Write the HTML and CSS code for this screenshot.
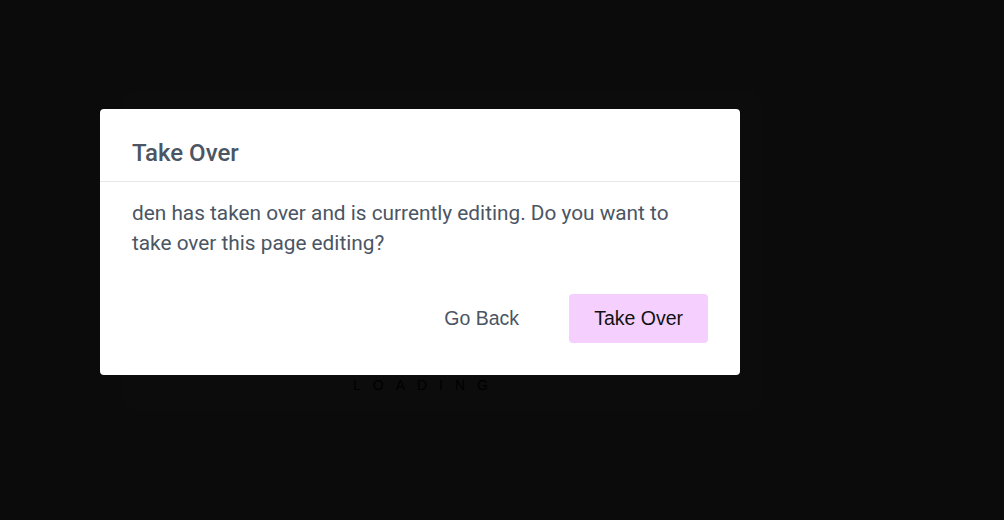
FILE: index.html
```html
<!DOCTYPE html>
<html>
<head>
<meta charset="utf-8">
<link rel="stylesheet" href="styles.css">
</head>
<body>
<div class="stage">
  <div class="loader">
    <div class="loading">LOADING</div>
  </div>
  <div class="modal">
    <div class="modal-header">
      <h2 class="modal-title">Take Over</h2>
    </div>
    <div class="modal-body">
      <p>den has taken over and is currently editing. Do you want to take over this page editing?</p>
    </div>
    <div class="modal-footer">
      <button class="btn btn-ghost">Go Back</button>
      <button class="btn btn-primary">Take Over</button>
    </div>
  </div>
</div>
</body>
</html>
```
FILE: styles.css
```css
html, body {
  margin: 0;
  padding: 0;
  background: #0b0b0b;
  width: 1004px;
  height: 520px;
  overflow: hidden;
}
.stage {
  position: relative;
  width: 1004px;
  height: 520px;
}
.loader {
  position: absolute;
  left: 122px;
  top: 92px;
  width: 640px;
  height: 318px;
  border-radius: 12px;
  background: #0c0c0c;
  box-shadow: 0 0 24px rgba(255,255,255,0.015);
}
.loading {
  position: absolute;
  left: 231px;
  top: 285px;
  font-family: "Liberation Sans", Arial, sans-serif;
  font-size: 14px;
  letter-spacing: 12px;
  color: #000;
}
.modal {
  position: absolute;
  left: 100px;
  top: 109px;
  width: 640px;
  background: #fff;
  border-radius: 4px;
  font-family: Roboto, "Liberation Sans", sans-serif;
}
.modal-header {
  padding: 30px 32px 14px;
  border-bottom: 1px solid #e5e7eb;
}
.modal-title {
  margin: 0;
  font-size: 24px;
  line-height: 28px;
  font-weight: 500;
  color: #4b5563;
}
.modal-body {
  padding: 16px 32px 0;
}
.modal-body p {
  margin: 0;
  font-size: 20.8px;
  line-height: 30px;
  color: #4b5563;
}
.modal-footer {
  display: flex;
  justify-content: flex-end;
  gap: 25px;
  padding: 36px 32px 32px;
}
.btn {
  border: 0;
  height: 49px;
  padding: 0 25px;
  border-radius: 4px;
  font-family: "Liberation Sans", Arial, sans-serif;
  font-size: 19.5px;
  cursor: pointer;
}
.btn-ghost {
  background: transparent;
  color: #4b5563;
}
.btn-primary {
  background: #f5d0fe;
  color: #111;
}
```
